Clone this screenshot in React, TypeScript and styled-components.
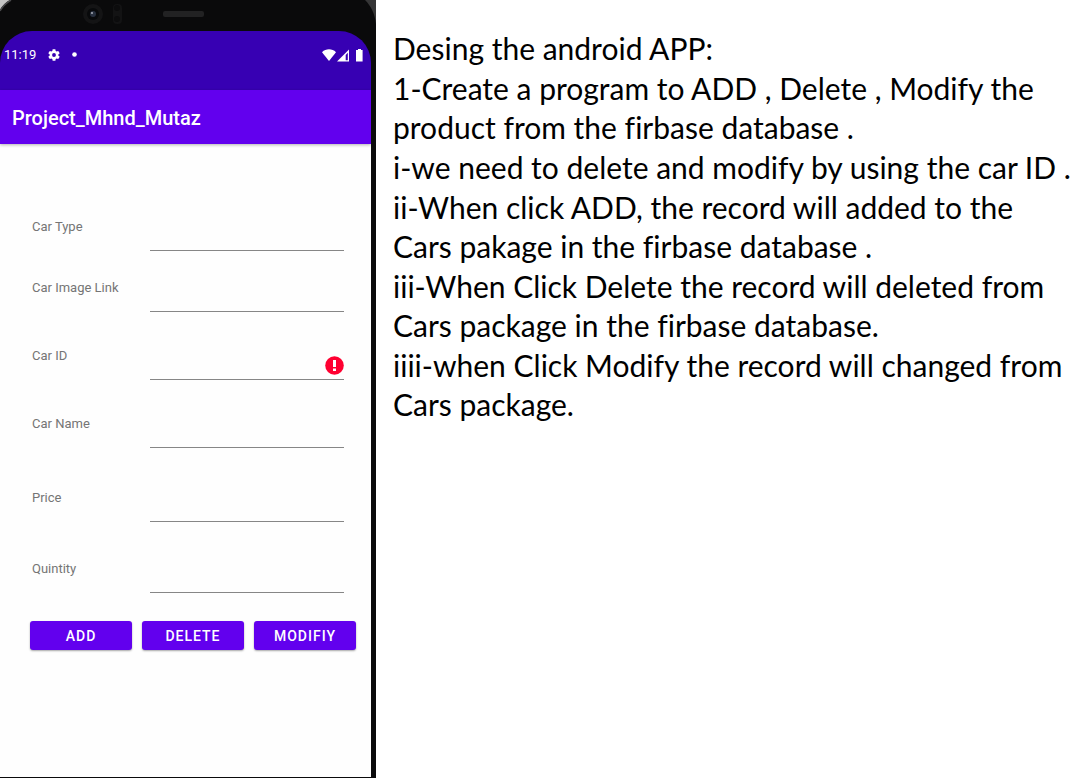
import React from "react";
import styled, { createGlobalStyle } from "styled-components";

const Global = createGlobalStyle`
  *, *::before, *::after { box-sizing: border-box; }
  body { margin: 0; background: #fff; }
`;

const Page = styled.div`
  display: flex;
  align-items: stretch;
  min-height: 100vh;
`;

const Phone = styled.section`
  flex: none;
  width: clamp(320px, 35vw, 376px);
  display: flex;
  flex-direction: column;
  padding: 0 5px 1px 0;
  background: #0a0a0b;
  font-family: Roboto, "Liberation Sans", sans-serif;
`;

const Bezel = styled.svg`
  display: block;
  width: 100%;
  height: 31px;
  overflow: visible;
`;

const Screen = styled.div`
  flex: 1;
  display: flex;
  flex-direction: column;
  border-radius: 32px 32px 0 0;
  overflow: hidden;
`;

const StatusBar = styled.div`
  display: flex;
  align-items: center;
  gap: 12px;
  height: 59px;
  padding: 0 7px 12px 4px;
  background: #3700b3;
  color: #fff;
`;

const Clock = styled.time`
  font-size: 13px;
  line-height: 16px;
`;

const StatusIcons = styled.div`
  display: flex;
  align-items: center;
  margin-left: auto;
`;

const AppBar = styled.header`
  position: relative;
  z-index: 1;
  display: flex;
  align-items: center;
  height: 54px;
  padding: 2px 12px 0;
  background: #6200ee;
  box-shadow: 0 1px 3px rgba(0, 0, 0, 0.3);
`;

const Title = styled.h1`
  margin: 0;
  color: #fff;
  font-size: 20px;
  font-weight: 500;
  line-height: 24px;
`;

const Form = styled.form`
  flex: 1;
  padding: 64px 15px 0 30px;
  background: #fefefe;
`;

const Field = styled.div<{ $height: number }>`
  position: relative;
  display: flex;
  align-items: flex-end;
  height: ${(p) => p.$height}px;
  padding: 0 12px 0 2px;
`;

const Label = styled.label`
  flex: none;
  width: 118px;
  padding-bottom: 16px;
  color: #757575;
  font-size: 13px;
  line-height: 16px;
`;

const Input = styled.input`
  flex: 1;
  min-width: 0;
  height: 32px;
  padding: 0 24px 0 0;
  border: 0;
  border-bottom: 1px solid #868686;
  outline: none;
  background: transparent;
  color: #212121;
  font: 16px/24px Roboto, sans-serif;
`;

const ErrorBadge = styled.svg`
  position: absolute;
  right: 12px;
  bottom: 5px;
`;

const Actions = styled.div`
  display: grid;
  grid-template-columns: repeat(3, 1fr);
  gap: 10px;
  margin-top: 28px;
`;

const Button = styled.button`
  height: 29px;
  padding: 0;
  border: 0;
  border-radius: 3px;
  background: #6200ee;
  box-shadow: 0 1px 2px rgba(0, 0, 0, 0.35);
  color: #fff;
  font: 500 14px/16px Roboto, sans-serif;
  letter-spacing: 1px;
`;

const Brief = styled.main`
  flex: 1;
  min-width: 0;
  padding: 29px 0 0 17px;
  color: #000;
  font-family: Lato, "Open Sans", sans-serif;
  font-size: 30px;
  line-height: 39px;
  font-variant-ligatures: none;
  white-space: nowrap;
`;

const Paragraph = styled.p`
  margin: 0 0 1px;
`;

const fields = [
  { id: "type", label: "Car Type", height: 43 },
  { id: "image", label: "Car Image Link", height: 61 },
  { id: "car-id", label: "Car ID", height: 68, error: true },
  { id: "name", label: "Car Name", height: 68 },
  { id: "price", label: "Price", height: 74 },
  { id: "quantity", label: "Quintity", height: 71 },
];

const paragraphs = [
  ["Desing the android APP:"],
  ["1-Create a program to ADD , Delete , Modify the", "product from the firbase database ."],
  ["i-we need to delete and modify by using the car ID ."],
  ["ii-When click ADD, the record will added to the", "Cars pakage in the firbase database ."],
  ["iii-When Click Delete the record will deleted from", "Cars package in the firbase database."],
  ["iiii-when Click Modify the record will changed from", "Cars package."],
];

export default function App() {
  return (
    <Page>
      <Global />
      <Phone aria-label="Phone">
        <Bezel viewBox="0 0 371 31" preserveAspectRatio="xMinYMin meet" aria-hidden="true">
          <path d="M0 0h10C6 2 2 6 0 10z" fill="#c4c4c4" />
          <path d="M0 11C2 7 6 3 11 0" fill="none" stroke="#4a4a4c" strokeWidth="1.5" />
          <path d="M365 0h11v24C375 14 371 6 365 0z" fill="#353536" />
          <circle cx="93" cy="14" r="10" fill="#141415" />
          <circle cx="93" cy="14" r="6" fill="#08090b" />
          <circle cx="93" cy="14" r="3" fill="#28303f" />
          <circle cx="92" cy="13" r="1" fill="#a9adb8" />
          <rect x="113" y="4" width="9" height="20" rx="4" fill="#131314" />
          <circle cx="117" cy="8" r="3" fill="#0c0c0d" />
          <circle cx="117" cy="19" r="3" fill="#0c0c0d" />
          <rect x="163" y="11" width="41" height="6" rx="2" fill="#222223" />
        </Bezel>
        <Screen>
          <StatusBar>
            <Clock>11:19</Clock>
            <svg width="12" height="12" viewBox="2 2 20 20" fill="#fff" aria-hidden="true">
              <path d="M19.14 12.94c.04-.3.06-.61.06-.94 0-.32-.02-.64-.07-.94l2.03-1.58a.49.49 0 0 0 .12-.61l-1.92-3.32a.49.49 0 0 0-.59-.22l-2.39.96a7 7 0 0 0-1.62-.94l-.36-2.54a.48.48 0 0 0-.48-.41h-3.84a.48.48 0 0 0-.47.41l-.36 2.54c-.59.24-1.13.57-1.62.94l-2.39-.96a.48.48 0 0 0-.59.22L2.74 8.87a.48.48 0 0 0 .12.61l2.03 1.58a6 6 0 0 0 0 1.88l-2.03 1.58a.49.49 0 0 0-.12.61l1.92 3.32c.12.22.37.29.59.22l2.39-.96c.5.38 1.03.7 1.62.94l.36 2.54c.05.24.24.41.48.41h3.84c.24 0 .44-.17.47-.41l.36-2.54a7 7 0 0 0 1.62-.94l2.39.96c.22.08.47 0 .59-.22l1.92-3.32a.48.48 0 0 0-.12-.61zM12 15.2a3.2 3.2 0 1 1 0-6.4 3.2 3.2 0 0 1 0 6.4z" />
            </svg>
            <svg width="5" height="5" viewBox="0 0 5 5" aria-hidden="true">
              <circle cx="2.5" cy="2.5" r="2.3" fill="#fff" />
            </svg>
            <StatusIcons>
              <svg width="43" height="14" viewBox="0 0 43 14" fill="#fff" aria-hidden="true">
                <path d="M1 4.2C5 .4 11 .4 15 4.2L8 13z" />
                <path d="M16 13.5L28 1.5v12z" />
                <path d="M24.7 6.9L26.8 4.7v7.6h-2.1z" fill="#3700b3" />
                <path d="M37 1h3v1h1.6v11.5H35V2h2z" />
              </svg>
            </StatusIcons>
          </StatusBar>
          <AppBar>
            <Title>Project_Mhnd_Mutaz</Title>
          </AppBar>
          <Form onSubmit={(e) => e.preventDefault()}>
            {fields.map((f) => (
              <Field key={f.id} $height={f.height}>
                <Label htmlFor={f.id}>{f.label}</Label>
                <Input id={f.id} type="text" aria-invalid={f.error} />
                {f.error && (
                  <ErrorBadge width="19" height="19" viewBox="0 0 19 19" aria-hidden="true">
                    <circle cx="9.5" cy="9.5" r="9.3" fill="#ff0031" />
                    <path d="M8 4h3v7H8zM8 12.5h3v2.5H8z" fill="#fff" />
                  </ErrorBadge>
                )}
              </Field>
            ))}
            <Actions>
              <Button type="submit">ADD</Button>
              <Button type="button">DELETE</Button>
              <Button type="button">MODIFIY</Button>
            </Actions>
          </Form>
        </Screen>
      </Phone>
      <Brief>
        {paragraphs.map((lines) => (
          <Paragraph key={lines[0]}>
            {lines.map((line, i) => (
              <React.Fragment key={line}>
                {i > 0 && <br />}
                {line}
              </React.Fragment>
            ))}
          </Paragraph>
        ))}
      </Brief>
    </Page>
  );
}
